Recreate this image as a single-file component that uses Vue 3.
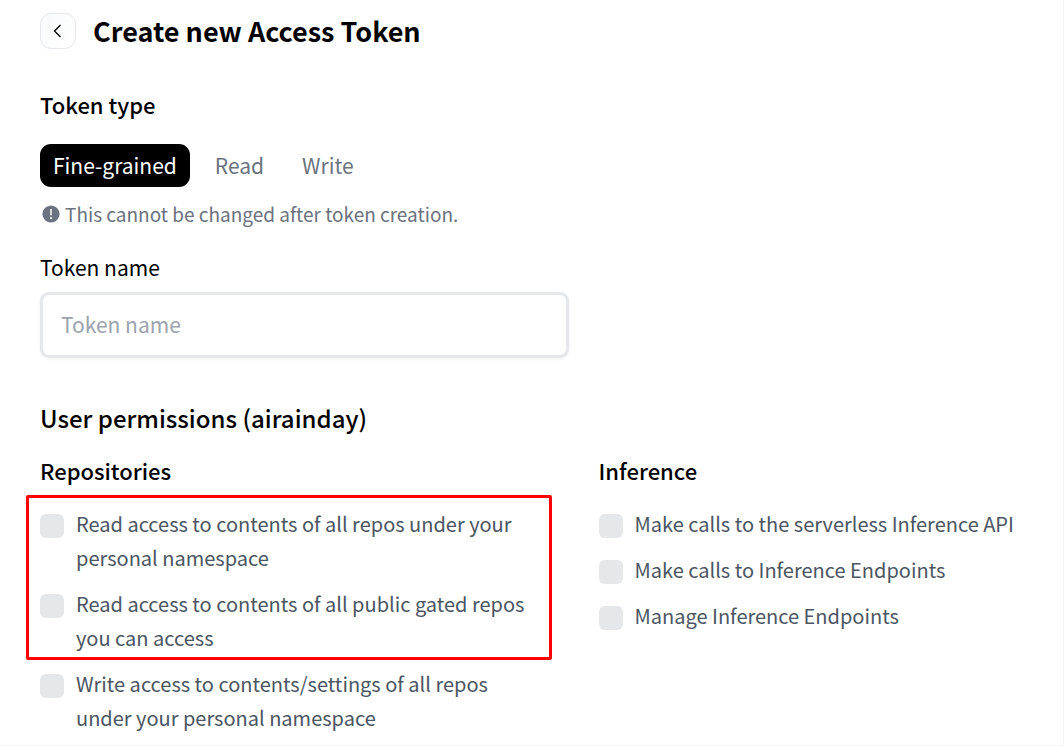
<script setup>
import { ref } from 'vue'

const tokenTypes = ['Fine-grained', 'Read', 'Write']
const tokenType = ref('Fine-grained')
const tokenName = ref('')
const granted = ref([])

const repositoryGroups = [
  {
    highlighted: true,
    items: [
      { id: 'repo-read', label: 'Read access to contents of all repos under your personal namespace' },
      { id: 'gated-read', label: 'Read access to contents of all public gated repos you can access' },
    ],
  },
  {
    highlighted: false,
    items: [
      { id: 'repo-write', label: 'Write access to contents/settings of all repos under your personal namespace' },
    ],
  },
]

const inferenceItems = [
  { id: 'serverless', label: 'Make calls to the serverless Inference API' },
  { id: 'endpoints-call', label: 'Make calls to Inference Endpoints' },
  { id: 'endpoints-manage', label: 'Manage Inference Endpoints' },
]
</script>

<template>
  <main class="page">
    <header class="header">
      <button class="back" type="button" aria-label="Back">
        <svg width="18" height="18" viewBox="0 0 18 18" aria-hidden="true">
          <path d="M11.5 3L5.5 9L11.5 15" fill="none" stroke="currentColor" stroke-width="1.3" />
        </svg>
      </button>
      <h1>Create new Access Token</h1>
    </header>

    <h2 class="type-title">Token type</h2>
    <div class="types" role="group" aria-label="Token type">
      <button
        v-for="type in tokenTypes"
        :key="type"
        type="button"
        class="type"
        :class="{ active: type === tokenType }"
        :aria-pressed="type === tokenType"
        @click="tokenType = type"
      >{{ type }}</button>
    </div>
    <p class="hint">
      <svg width="18" height="18" viewBox="0 0 18 18" aria-hidden="true">
        <circle cx="9" cy="9" r="8.6" fill="#6b7280" />
        <path d="M9 4v6.2" stroke="#fff" stroke-width="1.5" />
        <circle cx="9" cy="13.2" r="1.1" fill="#fff" />
      </svg>
      <span>This cannot be changed after token creation.</span>
    </p>

    <div class="columns">
      <div class="field">
        <label for="token-name">Token name</label>
        <input id="token-name" v-model="tokenName" type="text" placeholder="Token name" />
      </div>
    </div>

    <h2 class="permissions-title">User permissions (airainday)</h2>
    <div class="columns">
      <section>
        <h3>Repositories</h3>
        <div class="groups">
          <ul
            v-for="(group, index) in repositoryGroups"
            :key="index"
            class="list"
            :class="{ highlighted: group.highlighted }"
          >
            <li v-for="item in group.items" :key="item.id">
              <input :id="item.id" v-model="granted" type="checkbox" :value="item.id" />
              <label :for="item.id">{{ item.label }}</label>
            </li>
          </ul>
        </div>
      </section>
      <section>
        <h3>Inference</h3>
        <ul class="list inference">
          <li v-for="item in inferenceItems" :key="item.id">
            <input :id="item.id" v-model="granted" type="checkbox" :value="item.id" />
            <label :for="item.id">{{ item.label }}</label>
          </li>
        </ul>
      </section>
    </div>
  </main>
</template>

<style>
body {
  background: #fff;
}
</style>

<style scoped>
.page {
  box-sizing: border-box;
  padding: 13px 32px 10px 40px;
  border-right: 1px solid #f3f4f6;
  border-bottom: 1px solid #f3f4f6;
  color: #000;
  font-family: "Noto Sans CJK SC", "Noto Sans", sans-serif;
  font-size: 21px;
  line-height: 34px;
}

h1,
h2,
h3,
p,
ul {
  margin: 0;
  padding: 0;
}

button,
input {
  font: inherit;
}

.header {
  display: flex;
  align-items: center;
  gap: 17px;
}

.back {
  display: flex;
  align-items: center;
  justify-content: center;
  box-sizing: border-box;
  width: 36px;
  height: 36px;
  padding: 0;
  border: 1px solid #e5e7eb;
  border-radius: 11px;
  background: linear-gradient(to bottom right, #f9fafb, #fff);
  color: #000;
}

h1 {
  font-size: 27px;
  font-weight: 700;
  line-height: 36px;
}

h2,
h3 {
  font-size: 22px;
  font-weight: 500;
  line-height: 34px;
}

.type-title {
  margin-top: 38px;
}

.types {
  display: flex;
  gap: 12px;
  margin-top: 23px;
}

.type {
  height: 43px;
  padding: 0 13px 2px;
  border: 0;
  border-radius: 11px;
  background: transparent;
  color: #6b7280;
}

.type.active {
  background: #000;
  color: #fff;
}

.hint {
  display: flex;
  align-items: center;
  gap: 5px;
  margin-top: 13px;
  padding-left: 2px;
  color: #6b7280;
  font-size: 19px;
  line-height: 28px;
}

.columns {
  display: grid;
  grid-template-columns: minmax(0, 11fr) minmax(0, 9fr);
  column-gap: 30px;
}

.field {
  display: flex;
  flex-direction: column;
  gap: 8px;
  margin-top: 22px;
}

.field input {
  box-sizing: border-box;
  width: 100%;
  height: 66px;
  padding: 0 18px 2px;
  border: 3px solid #e5e7eb;
  border-radius: 9px;
  background: #fff;
  box-shadow: 0 1px 3px rgba(0, 0, 0, 0.06);
  color: #000;
}

.field input::placeholder {
  color: #9ca3af;
  opacity: 1;
}

.permissions-title {
  margin-top: 42px;
  font-size: 24px;
  line-height: 36px;
}

h3 {
  margin-top: 17px;
}

.groups,
.list {
  display: flex;
  flex-direction: column;
  gap: 12px;
}

.groups,
.inference {
  margin-top: 20px;
}

.list {
  list-style: none;
  color: #4b5563;
  font-size: 20px;
}

.list li {
  display: flex;
  align-items: flex-start;
  gap: 12px;
}

.groups li {
  padding-right: 24px;
}

.list input {
  flex: none;
  width: 24px;
  height: 24px;
  margin: 7px 0 0;
  border-radius: 6px;
  background: #e5e7eb;
  appearance: none;
}

.list input:checked {
  background: #4b5563;
}

.highlighted {
  position: relative;
}

.highlighted::after {
  position: absolute;
  inset: -12px 17px -5px -14px;
  border: 3px solid #f00;
  border-radius: 2px;
  content: "";
  pointer-events: none;
}
</style>
